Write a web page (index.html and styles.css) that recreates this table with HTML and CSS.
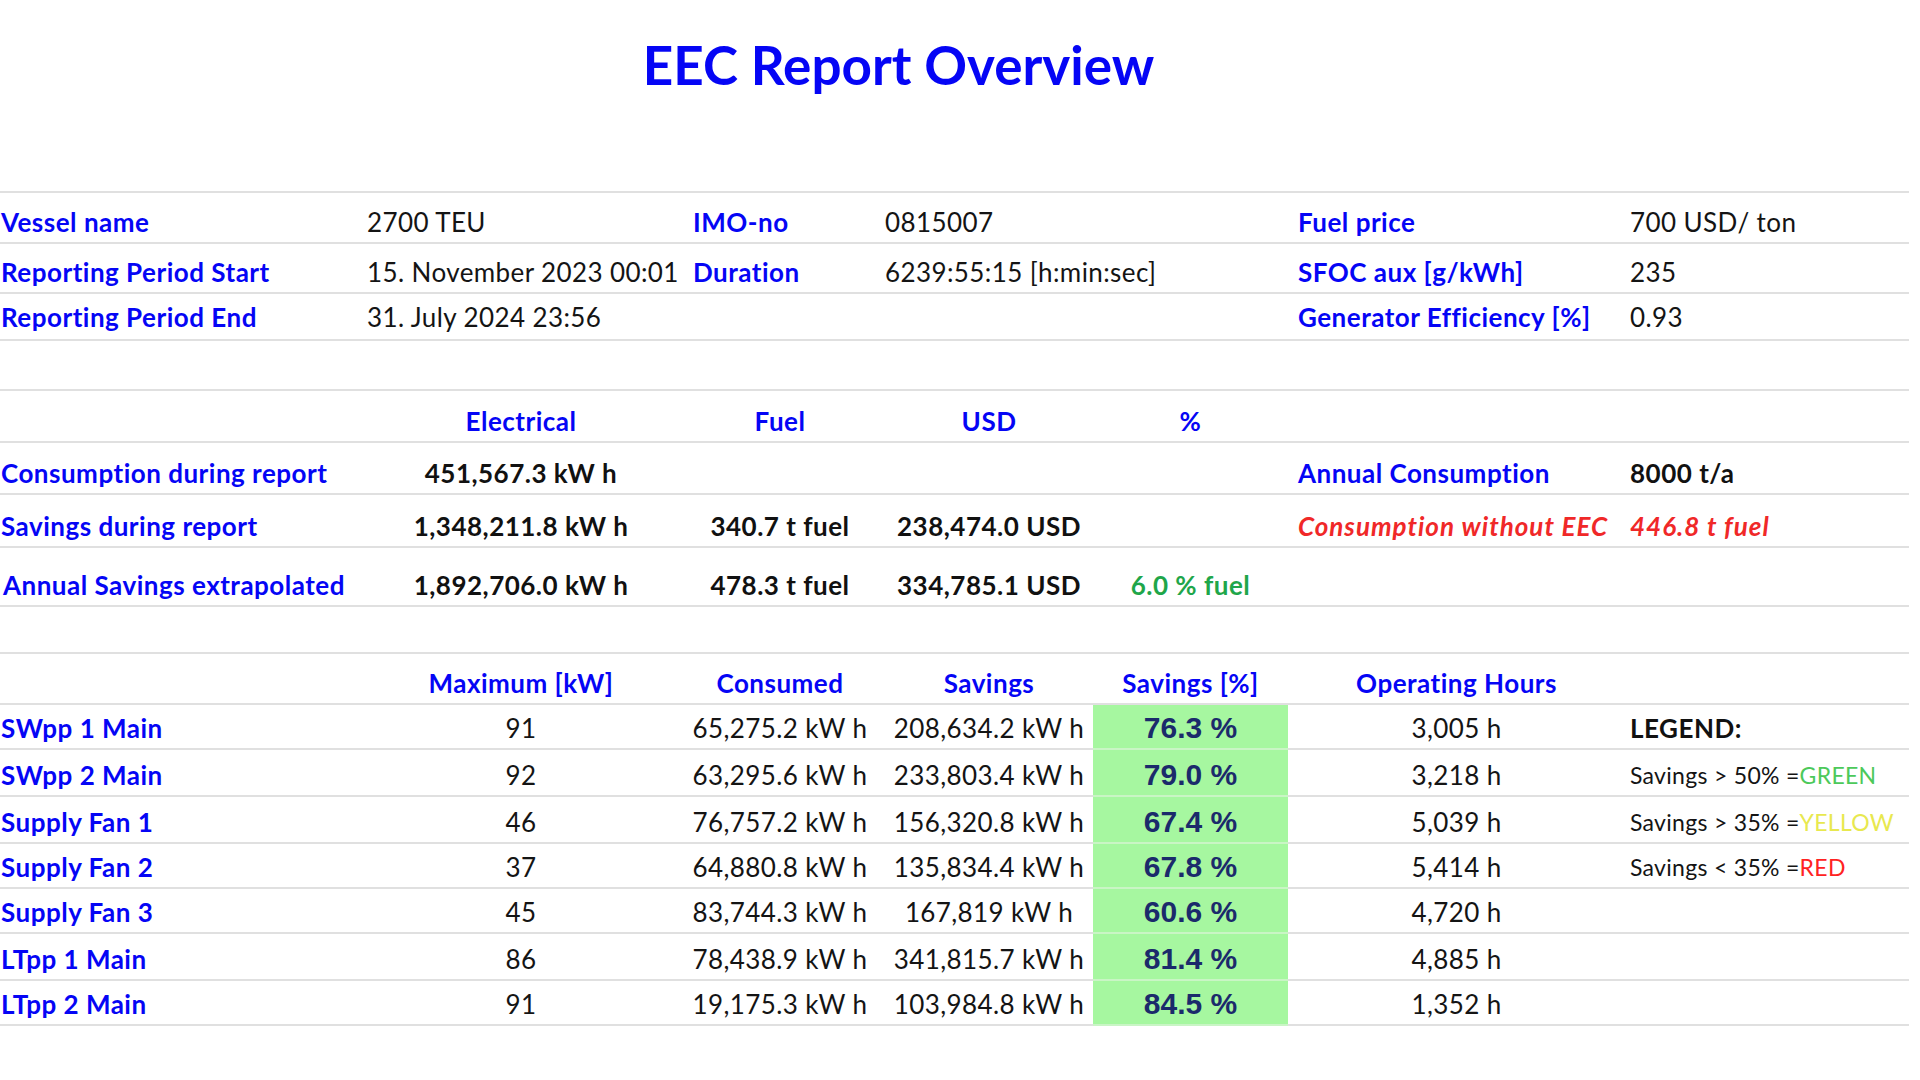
FILE: index.html
```html
<!DOCTYPE html>
<html lang="en">
<head>
<meta charset="utf-8">
<title>EEC Report Overview</title>
<link rel="stylesheet" href="styles.css">
</head>
<body>
<header class="title-area">
  <h1 class="title">EEC Report Overview</h1>
</header>

<section class="table">
  <div class="row r51">
    <div class="cell lbl">Vessel name</div>
    <div class="cell val">2700 TEU</div>
    <div class="cell lbl pc">IMO-no</div>
    <div class="cell val pd span2">0815007</div>
    <div class="cell lbl pf">Fuel price</div>
    <div class="cell val pg">700 USD/ ton</div>
  </div>
  <div class="row r50">
    <div class="cell lbl">Reporting Period Start</div>
    <div class="cell val">15. November 2023 00:01</div>
    <div class="cell lbl pc">Duration</div>
    <div class="cell val pd span2">6239:55:15 [h:min:sec]</div>
    <div class="cell lbl pf">SFOC aux [g/kWh]</div>
    <div class="cell val pg">235</div>
  </div>
  <div class="row r47 raise">
    <div class="cell lbl">Reporting Period End</div>
    <div class="cell val">31. July 2024 23:56</div>
    <div class="cell"></div>
    <div class="cell span2"></div>
    <div class="cell lbl pf">Generator Efficiency [%]</div>
    <div class="cell val pg">0.93</div>
  </div>
</section>

<section class="table t2">
  <div class="row r52">
    <div class="cell"></div>
    <div class="cell hd">Electrical</div>
    <div class="cell hd">Fuel</div>
    <div class="cell hd">USD</div>
    <div class="cell hd">%</div>
    <div class="cell"></div>
    <div class="cell"></div>
  </div>
  <div class="row r52">
    <div class="cell lbl">Consumption during report</div>
    <div class="cell num strong">451,567.3 kW h</div>
    <div class="cell"></div>
    <div class="cell"></div>
    <div class="cell"></div>
    <div class="cell lbl pf">Annual Consumption</div>
    <div class="cell val strong pg">8000 t/a</div>
  </div>
  <div class="row r53">
    <div class="cell lbl">Savings during report</div>
    <div class="cell num strong">1,348,211.8 kW h</div>
    <div class="cell num strong">340.7 t fuel</div>
    <div class="cell num strong">238,474.0 USD</div>
    <div class="cell"></div>
    <div class="cell alert pf">Consumption without EEC</div>
    <div class="cell alert pg">446.8 t fuel</div>
  </div>
  <div class="row r59">
    <div class="cell lbl ind">Annual Savings extrapolated</div>
    <div class="cell num strong">1,892,706.0 kW h</div>
    <div class="cell num strong">478.3 t fuel</div>
    <div class="cell num strong">334,785.1 USD</div>
    <div class="cell num good">6.0 % fuel</div>
    <div class="cell"></div>
    <div class="cell"></div>
  </div>
</section>

<section class="table t3">
  <div class="row r51">
    <div class="cell"></div>
    <div class="cell hd">Maximum [kW]</div>
    <div class="cell hd">Consumed</div>
    <div class="cell hd">Savings</div>
    <div class="cell hd">Savings [%]</div>
    <div class="cell hd">Operating Hours</div>
    <div class="cell"></div>
  </div>
  <div class="row r45">
    <div class="cell lbl">SWpp 1 Main</div>
    <div class="cell num">91</div>
    <div class="cell num">65,275.2 kW h</div>
    <div class="cell num">208,634.2 kW h</div>
    <div class="cell pct">76.3 %</div>
    <div class="cell num">3,005 h</div>
    <div class="cell val strong pg">LEGEND:</div>
  </div>
  <div class="row r47">
    <div class="cell lbl">SWpp 2 Main</div>
    <div class="cell num">92</div>
    <div class="cell num">63,295.6 kW h</div>
    <div class="cell num">233,803.4 kW h</div>
    <div class="cell pct">79.0 %</div>
    <div class="cell num">3,218 h</div>
    <div class="cell legend pg">Savings &gt; 50% =<span class="lg-green">GREEN</span></div>
  </div>
  <div class="row r47">
    <div class="cell lbl">Supply Fan 1</div>
    <div class="cell num">46</div>
    <div class="cell num">76,757.2 kW h</div>
    <div class="cell num">156,320.8 kW h</div>
    <div class="cell pct">67.4 %</div>
    <div class="cell num">5,039 h</div>
    <div class="cell legend pg">Savings &gt; 35% =<span class="lg-yellow">YELLOW</span></div>
  </div>
  <div class="row r45">
    <div class="cell lbl">Supply Fan 2</div>
    <div class="cell num">37</div>
    <div class="cell num">64,880.8 kW h</div>
    <div class="cell num">135,834.4 kW h</div>
    <div class="cell pct">67.8 %</div>
    <div class="cell num">5,414 h</div>
    <div class="cell legend pg">Savings &lt; 35% =<span class="lg-red">RED</span></div>
  </div>
  <div class="row r45">
    <div class="cell lbl">Supply Fan 3</div>
    <div class="cell num">45</div>
    <div class="cell num">83,744.3 kW h</div>
    <div class="cell num">167,819 kW h</div>
    <div class="cell pct">60.6 %</div>
    <div class="cell num">4,720 h</div>
    <div class="cell"></div>
  </div>
  <div class="row r47">
    <div class="cell lbl">LTpp 1 Main</div>
    <div class="cell num">86</div>
    <div class="cell num">78,438.9 kW h</div>
    <div class="cell num">341,815.7 kW h</div>
    <div class="cell pct">81.4 %</div>
    <div class="cell num">4,885 h</div>
    <div class="cell"></div>
  </div>
  <div class="row r45">
    <div class="cell lbl">LTpp 2 Main</div>
    <div class="cell num">91</div>
    <div class="cell num">19,175.3 kW h</div>
    <div class="cell num">103,984.8 kW h</div>
    <div class="cell pct">84.5 %</div>
    <div class="cell num">1,352 h</div>
    <div class="cell"></div>
  </div>
</section>
</body>
</html>
```

FILE: styles.css
```css
* {
  box-sizing: border-box;
}

html,
body {
  margin: 0;
  padding: 0;
  background: #ffffff;
}

body {
  width: 1920px;
  font-family: Lato, "Noto Sans", sans-serif;
  font-size: 26px;
  letter-spacing: 0.4px;
  color: #141414;
}

.title-area {
  width: 1797px;
  height: 191px;
  padding-top: 33px;
  text-align: center;
}

.title {
  margin: 0;
  font-size: 53px;
  line-height: 64px;
  font-weight: 700;
  letter-spacing: 0;
  color: #0505f5;
}

.table {
  width: 1909px;
  border-top: 2px solid #e0e0e0;
}

.t2 {
  margin-top: 48px;
}

.t3 {
  margin-top: 45px;
}

.row {
  display: grid;
  grid-template-columns: 367px 308px 210px 208px 195px 337px 1fr;
}

.r45 { height: 45px; }
.r47 { height: 47px; }
.r50 { height: 50px; }
.r51 { height: 51px; }
.r52 { height: 52px; }
.r53 { height: 53px; }
.r59 { height: 59px; }

.cell {
  display: flex;
  align-items: flex-end;
  min-width: 0;
  padding: 0 0 5px 1px;
  line-height: 30px;
  white-space: nowrap;
  border-bottom: 2px solid #e0e0e0;
}

.raise .cell {
  padding-bottom: 7px;
}

.span2 {
  grid-column: span 2;
}

.lbl {
  font-weight: 700;
  letter-spacing: 0.5px;
  color: #0505f5;
}

.ind {
  padding-left: 3px;
}

.val {
  color: #141414;
  padding-left: 0;
}

.pc { padding-left: 18px; }
.pd { padding-left: 0; }
.pf { padding-left: 10px; }
.pg { padding-left: 5px; }

.hd {
  justify-content: center;
  padding-left: 0;
  font-weight: 700;
  letter-spacing: 0.5px;
  color: #0505f5;
}

.num {
  justify-content: center;
  padding-left: 0;
}

.strong {
  font-weight: 700;
  letter-spacing: 0.5px;
  color: #111111;
}

.alert {
  font-weight: 700;
  font-style: italic;
  letter-spacing: 1px;
  color: #f02828;
}

.good {
  font-weight: 700;
  letter-spacing: 0.5px;
  color: #1fa64a;
}

.pct {
  justify-content: center;
  padding-left: 0;
  background: #a6f7a0;
  border-bottom-color: #c9f5c5;
  font-family: "Liberation Sans", Arial, sans-serif;
  font-size: 30px;
  font-weight: 700;
  letter-spacing: 0;
  color: #1b2a6b;
}

.legend {
  font-size: 23px;
  letter-spacing: 0.3px;
  color: #141414;
}

.lg-green { color: #4cc95a; }
.lg-yellow { color: #e8e84f; }
.lg-red { color: #ff2222; }
```
